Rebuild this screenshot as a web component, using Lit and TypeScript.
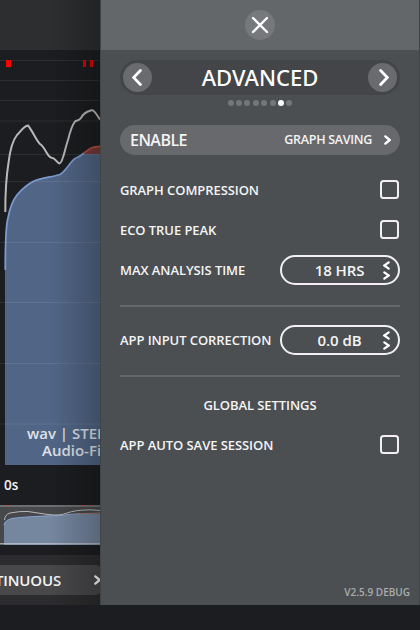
import { LitElement, html, css, svg } from "lit";
import { customElement, property } from "lit/decorators.js";

const chevron = (dir: "left" | "right", w: number, h: number, stroke: number) => {
  const p = stroke / 2 + 0.2;
  const d = dir === "right"
    ? `M${p} ${p}L${w - p} ${h / 2}L${p} ${h - p}`
    : `M${w - p} ${p}L${p} ${h / 2}L${w - p} ${h - p}`;
  return html`<svg width=${w} height=${h} viewBox="0 0 ${w} ${h}" fill="none" stroke="#fff" stroke-width=${stroke} stroke-linecap="round" stroke-linejoin="miter"><path d=${d}></path></svg>`;
};

@customElement("loudness-graph")
export class LoudnessGraph extends LitElement {
  static styles = css`
    :host { display: block; width: 100px; height: 415px; }
    svg { display: block; }
    text { font-family: "Open Sans", sans-serif; font-weight: 600; font-size: 15px; fill: #dfe2e8; }
  `;
  render() {
    const lines = [60.5, 80.5, 100.5, 121, 154.5, 181.5, 242.5, 302.5, 363.5, 424];
    return html`<svg width="100" height="415" viewBox="0 50 100 415">
      <rect x="0" y="50" width="100" height="415" fill="#1c1d20"></rect>
      <path d="M5 465V270C5 240 6 225 8 218C10 207 13 200 17 195C22 189 26 185 34 181C42 178 52 177 60 174.5C66 171 70 162 75 158.5C80 157 82 155 84 154H100V465Z" fill="#516686"></path>
      <path d="M83 154L91 148.5Q95 146.5 100 146.5V154Z" fill="#783a37"></path>
      ${lines.map((y) => svg`<path d="M0 ${y}H100" stroke="#fff" stroke-opacity=".08"></path>`)}
      <path d="M5.3 270C5.3 240 6 225 8 218C10 207 13 200 17 195C22 189 26 185 34 181C42 178 52 177 60 174.5C66 171 70 162 75 158.5C80 157 82 155 84 153" fill="none" stroke="#7b9ad0" stroke-width="1.8"></path>
      <path d="M84 153L91 148Q95 146.3 100 146.3" fill="none" stroke="#b54d42" stroke-width="1.8"></path>
      <path d="M5.3 212C5.3 195 6.5 175 8.5 163C10 150 13 140 17 135C21 131 24 126 28 125.5C32 130 36 140 40 144C45 147 47 156 51 157.5C56 158 57 163 59.5 163.5C63 163 65 148 68 140C70 132 73 124 75 121.5C77 120 79 121 81 118C84 112 89 111 92 110.2C95 110 97 116 100 119.5" fill="none" stroke="#b9b9b8" stroke-width="2"></path>
      <g fill="#f00"><rect x="6" y="60" width="5" height="7"></rect><rect x="83" y="60" width="3" height="7" fill="#d80606"></rect><rect x="90" y="60" width="3" height="7" fill="#d80606"></rect></g>
      <text x="27" y="439">wav | STEREO</text>
      <text x="42" y="456">Audio-File</text>
    </svg>`;
  }
}

@customElement("overview-strip")
export class OverviewStrip extends LitElement {
  static styles = css`:host { display: block; height: 40px; } svg { display: block; }`;
  render() {
    return html`<svg width="100" height="40" viewBox="0 505 100 40">
      <rect y="505" width="100" height="40" fill="#47484b"></rect>
      <path d="M4 545V524Q5 520 12 518.5Q25 516.5 60 515.5Q75 513.5 100 513.5V545Z" fill="#75869f"></path>
      <path d="M4 525Q5 520 12 518.5Q25 516.5 60 515.5Q70 514 80 513.7" fill="none" stroke="#8aa3cf"></path>
      <path d="M78 513.8L100 513" stroke="#a57a78"></path>
      <path d="M4.5 520Q5 514.5 10 513Q20 511 28 511.5Q38 513 48 514.5Q60 516 67 513Q75 510 90 509.8L100 510.5" fill="none" stroke="#b8b8b8"></path>
      <path d="M0 506H100" stroke="#949494"></path>
      <path d="M0 543.8H100" stroke="#c8cbd2"></path>
      <path d="M5 505.5H10M82 505.5H85M89 505.5H92" stroke="#c04a45"></path>
    </svg>`;
  }
}

@customElement("stepper-field")
export class StepperField extends LitElement {
  @property() value = "";
  static styles = css`
    :host { display: block; }
    .box { box-sizing: border-box; width: 120px; height: 30px; border: 2px solid #f2eff2; border-radius: 15px; display: flex; align-items: center; justify-content: space-between; padding: 0 8px 0 0; font-size: 15px; }
    .value { flex: 1; text-align: center; padding-left: 14px; }
    .arrows { display: flex; flex-direction: column; gap: 1px; }
    svg { display: block; }
  `;
  render() {
    return html`<div class="box"><span class="value">${this.value}</span><span class="arrows">${chevron("left", 7, 9, 2.2)}${chevron("right", 7, 9, 2.2)}</span></div>`;
  }
}

@customElement("app-root")
export class AppRoot extends LitElement {
  static styles = css`
    :host { display: block; width: 420px; height: 630px; overflow: hidden; background: #1c1d20; color: #f4f4f4; font: 600 13px/20px "Open Sans", sans-serif; }
    svg { display: block; flex: none; }
    .layout { display: grid; grid-template-columns: 100px 320px; height: 605px; }
    .back { position: relative; overflow: hidden; display: flex; flex-direction: column; white-space: nowrap; }
    .shade { position: absolute; inset: 0; background: linear-gradient(90deg, transparent 50%, rgba(0, 0, 0, .23)); }
    .top { height: 50px; background: #2d2e30; }
    .time { height: 40px; line-height: 41px; padding-left: 4px; font-size: 13.5px; }
    .foot { margin-top: 10px; height: 50px; background: #2c2c2e; display: flex; align-items: center; }
    .mode { width: 101px; flex: none; height: 30px; background: #48484a; border-radius: 0 5px 5px 0; display: flex; align-items: center; justify-content: space-between; font-size: 15px; }
    .clip { width: 61px; display: flex; justify-content: flex-end; overflow: hidden; letter-spacing: -.15px; }
    .panel { background: #4b4f52; display: flex; flex-direction: column; box-sizing: border-box; border-left: 1px solid #404447; border-right: 1px solid #404447; }
    .bar { flex: none; height: 50px; background: #636769; display: flex; align-items: center; justify-content: center; }
    .round { width: 30px; height: 30px; border-radius: 50%; background: #76787b; display: flex; align-items: center; justify-content: center; }
    .body { flex: 1; padding: 10px 19px 0; display: flex; flex-direction: column; }
    .pager { height: 35px; border-radius: 18px; background: #444548; display: flex; align-items: center; justify-content: space-between; padding: 0 3px; }
    .nav { width: 29px; height: 29px; background: #6a6b6f; }
    .nav.prev svg { margin-right: 2px; }
    .nav.next svg { margin-left: 2px; }
    .title { font: 500 22px/20px "Noto Sans", sans-serif; color: #fff; margin-top: -1px; }
    .dots { height: 15px; display: flex; align-items: center; justify-content: center; gap: 2.4px; }
    .dot { width: 6px; height: 6px; border-radius: 50%; background: #74767a; }
    .dot.on { background: #fff; }
    .enable { margin-top: 15px; height: 30px; border-radius: 15px; background: #68696d; display: flex; align-items: center; padding: 0 9px 0 10px; }
    .big { font-size: 16px; flex: 1; letter-spacing: -.55px; }
    .saving { font-size: 12.5px; letter-spacing: -.3px; margin-right: 12px; }
    .rows { margin-top: 15px; }
    .row { height: 40px; display: flex; align-items: center; justify-content: space-between; letter-spacing: -.07px; }
    .check { width: 15px; height: 15px; border: 2px solid #f2eff2; border-radius: 3.5px; margin: 0 1px 1px 0; }
    .rule { height: 2px; background: #65676a; margin: 15px 0 13px; }
    .global { height: 40px; margin-top: -5px; display: flex; align-items: center; justify-content: center; letter-spacing: -.07px; }
    .version { margin-top: auto; align-self: flex-end; margin-right: -10px; margin-bottom: 3px; font-size: 10px; color: #aaacae; }
  `;
  private check(label: string) {
    return html`<div class="row"><span>${label}</span><span class="check"></span></div>`;
  }
  private step(label: string, value: string) {
    return html`<div class="row"><span>${label}</span><stepper-field value=${value}></stepper-field></div>`;
  }
  render() {
    return html`<div class="layout">
      <div class="back">
        <div class="top"></div>
        <loudness-graph></loudness-graph>
        <div class="time">0s</div>
        <overview-strip></overview-strip>
        <div class="foot"><div class="mode"><span class="clip">CONTINUOUS</span>${chevron("right", 7, 10, 2.3)}</div></div>
        <div class="shade"></div>
      </div>
      <div class="panel">
        <div class="bar"><span class="round"><svg width="18" height="18" viewBox="0 0 18 18" stroke="#fff" stroke-width="2.3" stroke-linecap="round"><path d="M2 2L16 16M16 2L2 16"></path></svg></span></div>
        <div class="body">
          <div class="pager"><span class="round nav prev">${chevron("left", 10, 17, 2.8)}</span><span class="title">ADVANCED</span><span class="round nav next">${chevron("right", 10, 17, 2.8)}</span></div>
          <div class="dots">${Array.from({ length: 8 }, (_, i) => html`<span class="dot ${i === 6 ? "on" : ""}"></span>`)}</div>
          <div class="enable"><span class="big">ENABLE</span><span class="saving">GRAPH SAVING</span>${chevron("right", 7, 10, 2.4)}</div>
          <div class="rows">
            ${this.check("GRAPH COMPRESSION")}${this.check("ECO TRUE PEAK")}${this.step("MAX ANALYSIS TIME", "18 HRS")}
            <div class="rule"></div>
            ${this.step("APP INPUT CORRECTION", "0.0 dB")}
            <div class="rule"></div>
            <div class="global">GLOBAL SETTINGS</div>
            ${this.check("APP AUTO SAVE SESSION")}
          </div>
          <div class="version">V2.5.9 DEBUG</div>
        </div>
      </div>
    </div>`;
  }
}
